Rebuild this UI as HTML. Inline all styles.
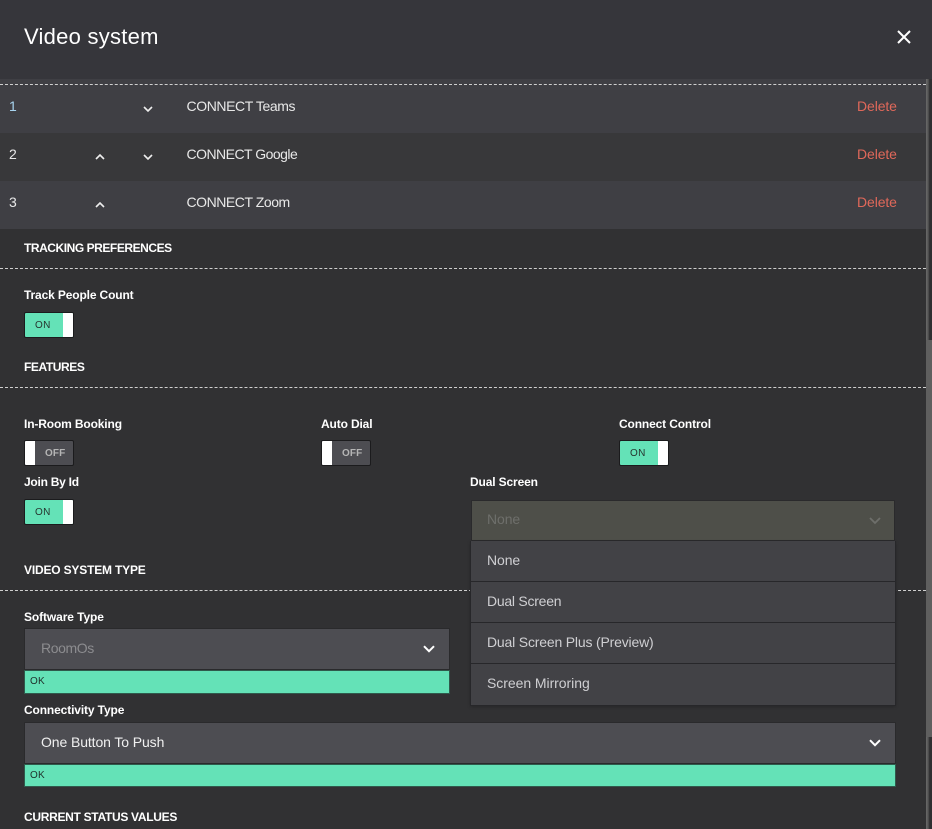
<!DOCTYPE html>
<html>
<head>
<meta charset="utf-8">
<style>
html,body{margin:0;padding:0;width:932px;height:829px;overflow:hidden;background:#313133;font-family:"Liberation Sans",sans-serif;color:#fff}
.a{position:absolute}
.t{position:absolute;white-space:nowrap;line-height:16px}
.row{position:absolute;left:0;width:926px}
.rt{font-size:14px;color:#e8e8e8;letter-spacing:-.1px}
.del{font-size:14px;color:#e0685a;left:857px;letter-spacing:-.1px}
.h{font-size:12px;font-weight:bold;left:24px;color:#fff;letter-spacing:-.3px}
.l{font-size:12px;font-weight:bold;color:#fff;letter-spacing:-.14px}
.dash{position:absolute;left:0;width:926px;height:0;border-top:1px dashed #cfcfcf}
.tg{position:absolute;width:48px;height:24px;border:1px solid #1b1b1d;border-radius:2px;overflow:hidden}
.tg.on{background:#64e2b7}
.tg.on i{position:absolute;right:0;top:0;width:10px;height:24px;background:#fff}
.tg.on b{position:absolute;left:10px;top:5px;font-size:10px;line-height:16px;font-weight:normal;color:#26352f;letter-spacing:.4px}
.tg.off{background:#4d4d52}
.tg.off i{position:absolute;left:0;top:0;width:10px;height:24px;background:#fff}
.tg.off b{position:absolute;left:20px;top:5px;font-size:10px;line-height:16px;font-weight:bold;color:#b5b5b5;letter-spacing:.1px}
.sel{position:absolute;background:#4d4d52;border:1px solid #2a2a2c;box-sizing:border-box;border-radius:1px}
.ok{position:absolute;background:#64e2b7;border:1px solid #2f5a4c;box-sizing:border-box;font-size:10px;line-height:22px;color:#1f2f2a;padding-left:5px;font-weight:normal;letter-spacing:.2px}
.opt{position:absolute;left:471px;width:424px;height:41px;background:#424246;border-bottom:1px solid #27272a;box-sizing:border-box;font-size:14px;color:#cfcfd2;line-height:39px;padding-left:16px;letter-spacing:-.1px}
svg{position:absolute;overflow:visible}
</style>
</head>
<body>
<div class="a" style="left:0;top:0;width:932px;height:79px;background:#36363b"></div>
<div class="t" style="left:24px;top:24px;font-size:22px;line-height:26px;color:#fff;letter-spacing:.25px">Video system</div>
<svg style="left:897px;top:30px" width="14" height="14" viewBox="0 0 14 14"><path d="M1 1L13 13M13 1L1 13" stroke="#fff" stroke-width="2" fill="none"/></svg>

<div class="row" style="top:79px;height:54px;background:#3f3f44"></div>
<div class="row" style="top:133px;height:48px;background:#38383a"></div>
<div class="row" style="top:181px;height:48px;background:#3f3f44"></div>
<div class="dash" style="top:84px"></div>

<div class="t rt" style="left:9px;top:98px;color:#a8d4f0">1</div>
<div class="t rt" style="left:9px;top:146px">2</div>
<div class="t rt" style="left:9px;top:194px">3</div>

<svg style="left:143px;top:106px" width="10" height="6" viewBox="0 0 10 6"><path d="M1 1L5 5L9 1" stroke="#eee" stroke-width="1.6" fill="none"/></svg>
<svg style="left:95px;top:154px" width="10" height="6" viewBox="0 0 10 6"><path d="M1 5L5 1L9 5" stroke="#eee" stroke-width="1.6" fill="none"/></svg>
<svg style="left:143px;top:154px" width="10" height="6" viewBox="0 0 10 6"><path d="M1 1L5 5L9 1" stroke="#eee" stroke-width="1.6" fill="none"/></svg>
<svg style="left:95px;top:202px" width="10" height="6" viewBox="0 0 10 6"><path d="M1 5L5 1L9 5" stroke="#eee" stroke-width="1.6" fill="none"/></svg>

<div class="t rt" style="left:186.5px;top:98px;letter-spacing:-.4px">CONNECT Teams</div>
<div class="t rt" style="left:186.5px;top:146px;letter-spacing:-.52px">CONNECT Google</div>
<div class="t rt" style="left:186.5px;top:194px;letter-spacing:-.45px">CONNECT Zoom</div>
<div class="t del" style="top:98px">Delete</div>
<div class="t del" style="top:146px">Delete</div>
<div class="t del" style="top:194px">Delete</div>

<div class="t h" style="top:240px;letter-spacing:-.45px">TRACKING PREFERENCES</div>
<div class="dash" style="top:268px"></div>
<div class="t l" style="left:24px;top:287px">Track People Count</div>
<div class="tg on" style="left:24px;top:312px"><b>ON</b><i></i></div>

<div class="t h" style="top:359px;letter-spacing:-.42px">FEATURES</div>
<div class="dash" style="top:387px"></div>

<div class="t l" style="left:24px;top:416px">In-Room Booking</div>
<div class="tg off" style="left:24px;top:440px"><i></i><b>OFF</b></div>
<div class="t l" style="left:321px;top:416px">Auto Dial</div>
<div class="tg off" style="left:321px;top:440px"><i></i><b>OFF</b></div>
<div class="t l" style="left:619px;top:416px">Connect Control</div>
<div class="tg on" style="left:619px;top:440px"><b>ON</b><i></i></div>

<div class="t l" style="left:24px;top:474px;letter-spacing:-.25px">Join By Id</div>
<div class="tg on" style="left:24px;top:499px"><b>ON</b><i></i></div>

<div class="t h" style="top:562px;letter-spacing:-.18px">VIDEO SYSTEM TYPE</div>
<div class="dash" style="top:590px"></div>

<div class="t l" style="left:470px;top:474px">Dual Screen</div>
<div class="sel" style="left:471px;top:500px;width:424px;height:41px;background:#4e4f49"></div>
<div class="t" style="left:487px;top:511px;font-size:14px;color:#6e6f6b;letter-spacing:-.1px">None</div>
<svg style="left:869px;top:517px" width="12" height="7" viewBox="0 0 12 7"><path d="M1 1L6 6L11 1" stroke="#6e6f6b" stroke-width="1.8" fill="none"/></svg>

<div class="a" style="left:470px;top:541px;width:426px;height:165px;background:#27272a;box-shadow:0 1px 3px rgba(0,0,0,.2)"></div>
<div class="opt" style="top:541px">None</div>
<div class="opt" style="top:582px;letter-spacing:-.25px">Dual Screen</div>
<div class="opt" style="top:623px;letter-spacing:-.18px">Dual Screen Plus (Preview)</div>
<div class="opt" style="top:664px;border-bottom:0;letter-spacing:-.05px">Screen Mirroring</div>

<div class="t l" style="left:24px;top:609px;letter-spacing:-.1px">Software Type</div>
<div class="sel" style="left:24px;top:628px;width:426px;height:42px"></div>
<div class="t" style="left:41px;top:640px;font-size:14px;color:#8c8c8f;letter-spacing:-.4px">RoomOs</div>
<svg style="left:423px;top:645px" width="12" height="8" viewBox="0 0 12 8"><path d="M1 1.2L6 6.2L11 1.2" stroke="#fff" stroke-width="2" fill="none"/></svg>
<div class="ok" style="left:24px;top:670px;width:426px;height:24px">OK</div>

<div class="t l" style="left:24px;top:702px;letter-spacing:-.13px">Connectivity Type</div>
<div class="sel" style="left:24px;top:722px;width:872px;height:42px"></div>
<div class="t" style="left:41px;top:734px;font-size:14px;color:#f0f0f0;letter-spacing:-.1px">One Button To Push</div>
<svg style="left:869px;top:739px" width="12" height="8" viewBox="0 0 12 8"><path d="M1 1.2L6 6.2L11 1.2" stroke="#fff" stroke-width="2" fill="none"/></svg>
<div class="ok" style="left:24px;top:764px;width:872px;height:23px">OK</div>

<div class="t h" style="top:809px">CURRENT STATUS VALUES</div>

<div class="a" style="left:926px;top:79px;width:6px;height:750px;background:linear-gradient(90deg,#6a6a6a 0,#555 35%,#2f2f31 60%,#2f2f31 100%)"></div>
<div class="a" style="left:926px;top:340px;width:6px;height:397px;background:#5f5f5f"></div>
</body>
</html>
